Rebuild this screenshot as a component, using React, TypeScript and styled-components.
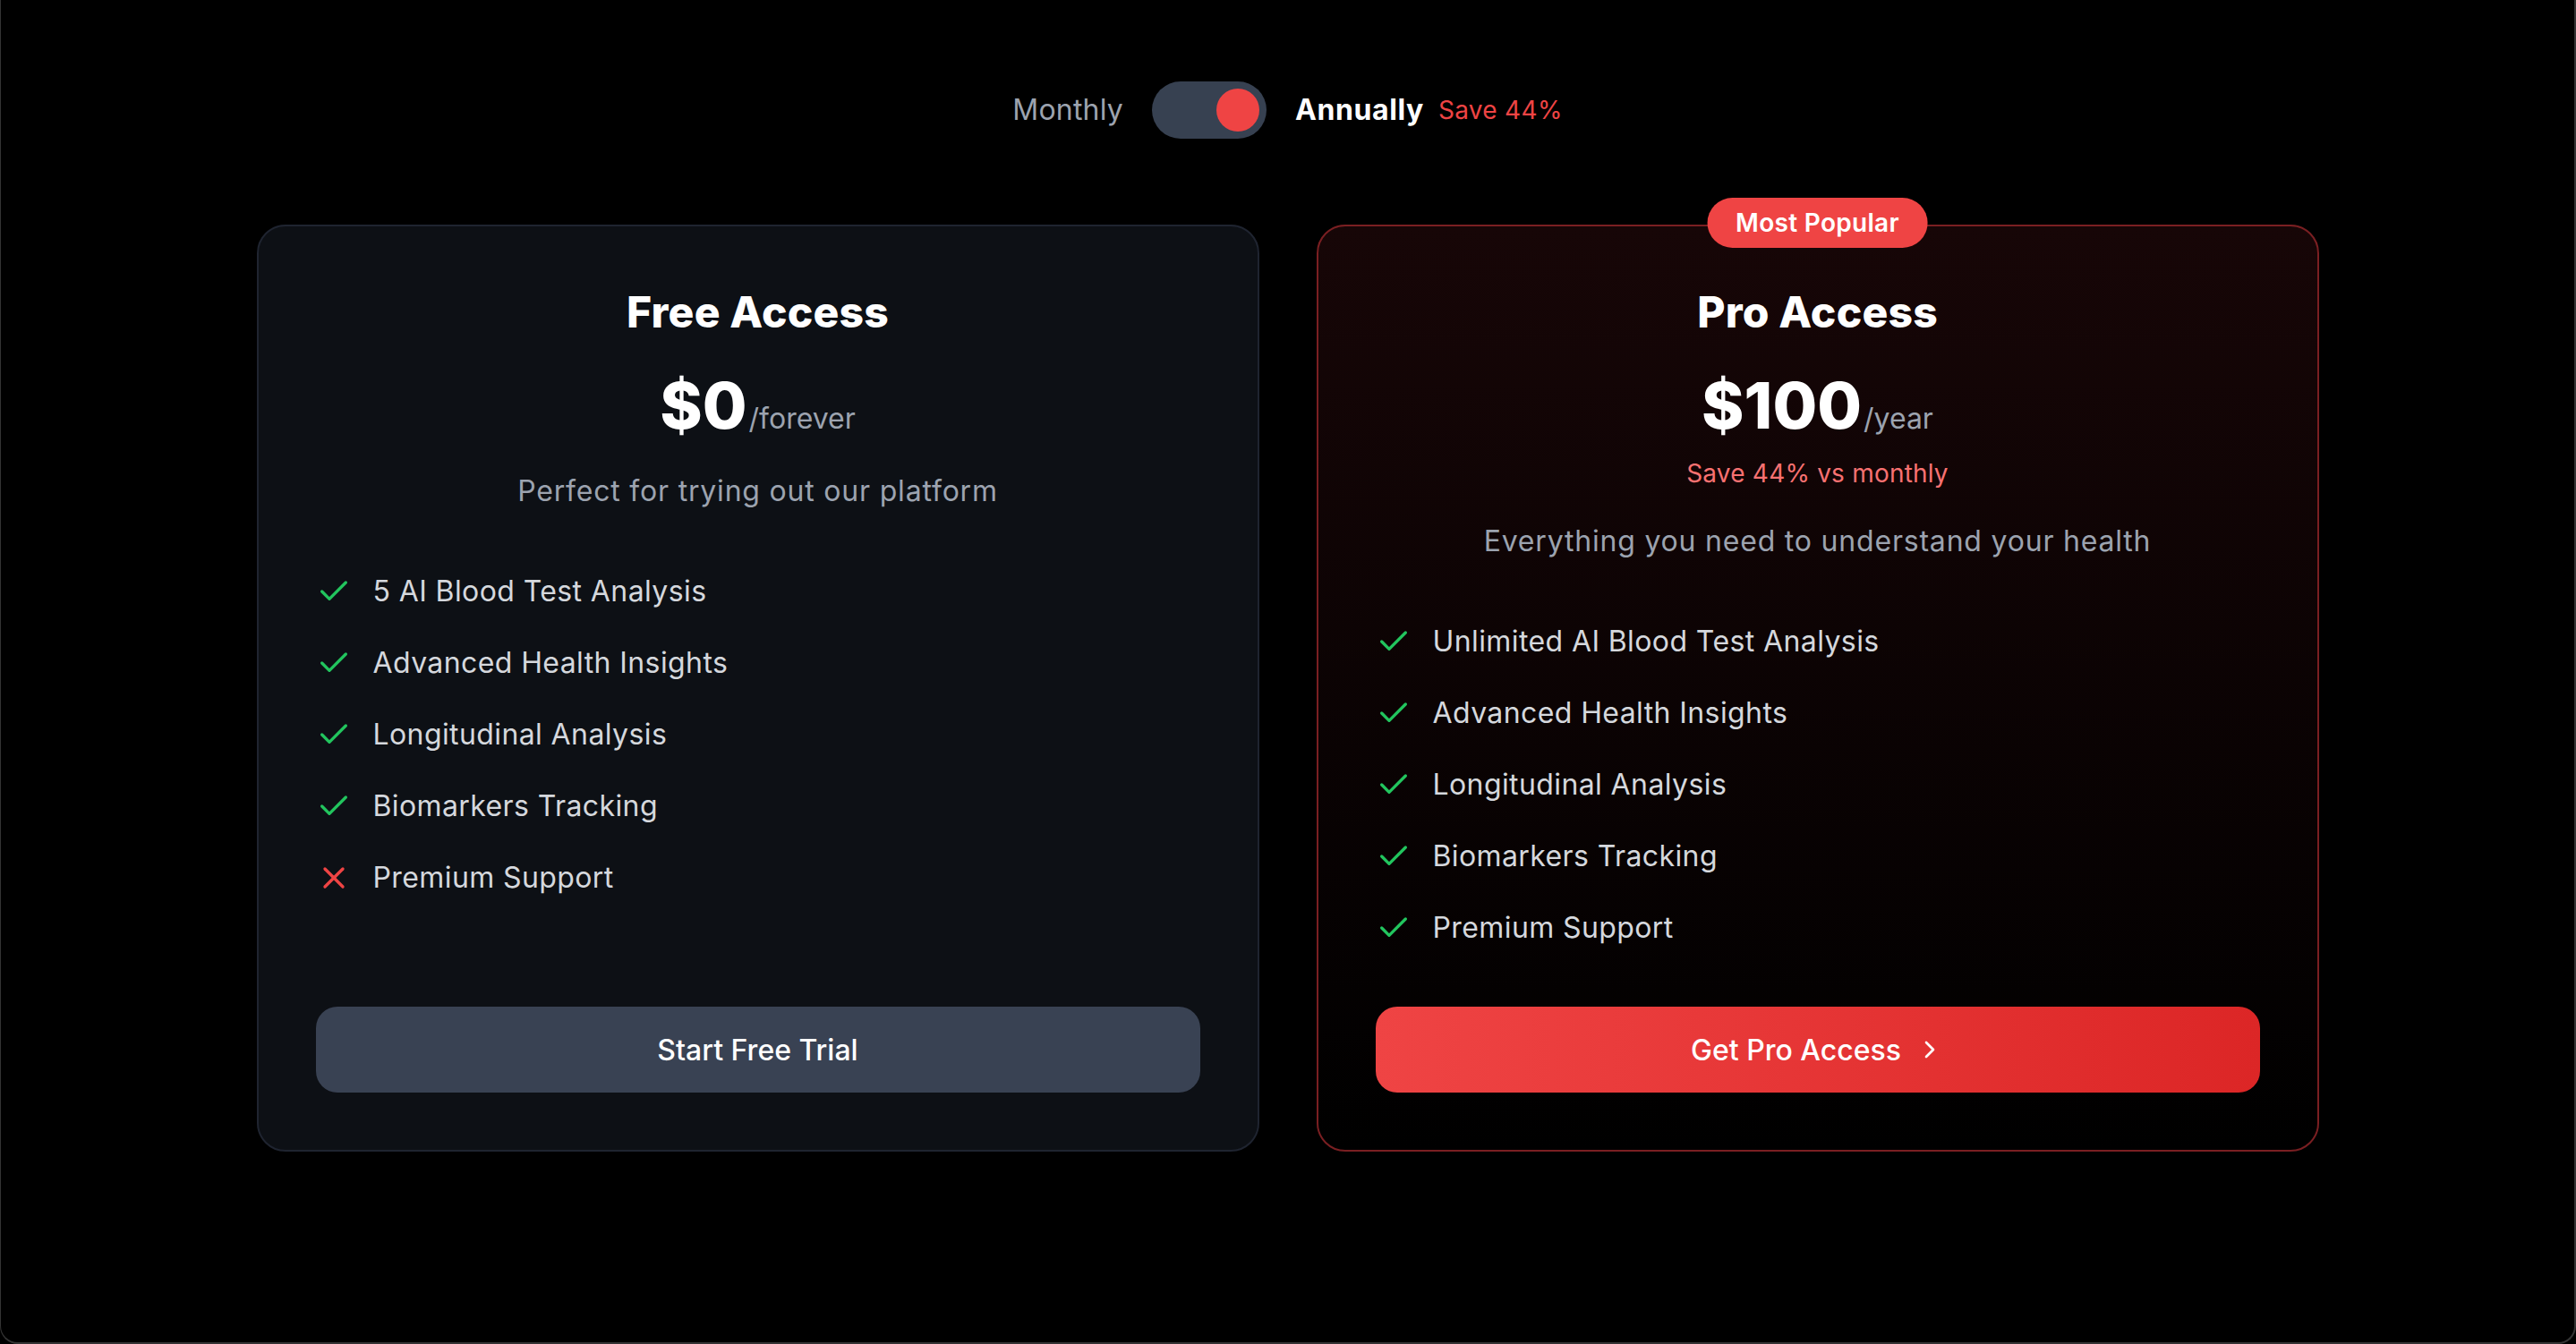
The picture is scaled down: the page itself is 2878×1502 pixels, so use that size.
import React from "react";
import styled, { createGlobalStyle } from "styled-components";

const GlobalStyle = createGlobalStyle`
  html, body {
    margin: 0;
    padding: 0;
    background: #000;
  }
  body {
    font-family: Inter, "Noto Sans", "DejaVu Sans", sans-serif;
    color: #fff;
  }
  * { box-sizing: border-box; }
`;

const Frame = styled.div`
  min-height: 1502px;
  background: #000;
  border-right: 2px solid #343434;
  border-bottom: 2px solid #343434;
  border-left: 1px solid #343434;
  border-radius: 0 0 20px 20px;
  padding-top: 91px;
  display: flex;
  flex-direction: column;
  align-items: center;
`;

const BillingRow = styled.div`
  display: flex;
  align-items: center;
  gap: 32px;
  margin-bottom: 96px;
`;

const BillingLabel = styled.span<{ $active?: boolean }>`
  font-size: 32px;
  line-height: 48px;
  font-weight: ${(p) => (p.$active ? 700 : 400)};
  letter-spacing: ${(p) => (p.$active ? "0.6px" : "0.2px")};
  color: ${(p) => (p.$active ? "#ffffff" : "#9ca3af")};
  display: flex;
  align-items: center;
`;

const SaveTag = styled.span`
  font-size: 28px;
  line-height: 40px;
  font-weight: 400;
  letter-spacing: 0.3px;
  color: #ef4444;
  margin-left: 16px;
`;

const Toggle = styled.button`
  width: 128px;
  height: 64px;
  border-radius: 999px;
  background: #374151;
  border: none;
  padding: 8px;
  display: flex;
  justify-content: flex-end;
  align-items: center;
  cursor: pointer;
`;

const Knob = styled.span`
  width: 48px;
  height: 48px;
  border-radius: 50%;
  background: #ef4444;
`;

const Grid = styled.div`
  width: 2304px;
  display: grid;
  grid-template-columns: 1fr 1fr;
  gap: 64px;
`;

const Card = styled.div<{ $pro?: boolean }>`
  position: relative;
  display: flex;
  flex-direction: column;
  padding: 64px;
  border-radius: 32px;
  border: 2px solid ${(p) => (p.$pro ? "#7a1f22" : "#1f2430")};
  background: ${(p) =>
    p.$pro ? "linear-gradient(to bottom, #170607 0%, #000000 100%)" : "#0d1015"};
`;

const Badge = styled.div`
  position: absolute;
  top: -4px;
  left: 50%;
  transform: translate(-50%, -50%);
  background: #ef4444;
  color: #fff;
  font-size: 28px;
  line-height: 40px;
  font-weight: 600;
  letter-spacing: 0.3px;
  padding: 8px 32px;
  border-radius: 999px;
  white-space: nowrap;
`;

const Header = styled.div`
  text-align: center;
`;

const PlanTitle = styled.h3`
  margin: 0 0 32px;
  font-size: 48px;
  line-height: 64px;
  font-weight: 800;
  color: #fff;
  letter-spacing: 0.2px;
`;

const PriceRow = styled.div<{ $tight?: boolean }>`
  display: flex;
  justify-content: center;
  align-items: baseline;
  margin-bottom: ${(p) => (p.$tight ? "16px" : "32px")};
`;

const Amount = styled.span`
  font-size: 72px;
  line-height: 80px;
  font-weight: 800;
  color: #fff;
`;

const Period = styled.span`
  font-size: 32px;
  line-height: 48px;
  color: #9ca3af;
  margin-left: 2px;
`;

const SaveNote = styled.p`
  margin: 0 0 32px;
  font-size: 28px;
  line-height: 40px;
  letter-spacing: 0.2px;
  color: #f87171;
`;

const Description = styled.p`
  margin: 0 0 64px;
  font-size: 32px;
  line-height: 48px;
  letter-spacing: 0.8px;
  color: #9ca3af;
`;

const FeatureList = styled.ul`
  list-style: none;
  margin: 0 0 64px;
  padding: 0;
  display: flex;
  flex-direction: column;
  gap: 32px;
  flex: 1;
`;

const Feature = styled.li`
  display: flex;
  align-items: center;
  gap: 24px;
  font-size: 32px;
  line-height: 48px;
  letter-spacing: 0.4px;
  color: #d5d8dd;
`;

const IconBox = styled.span`
  width: 40px;
  height: 40px;
  flex-shrink: 0;
  display: flex;
`;

const ActionButton = styled.button<{ $pro?: boolean }>`
  width: 100%;
  height: 96px;
  border: none;
  border-radius: 24px;
  font-family: inherit;
  font-size: 32px;
  font-weight: 500;
  color: #fff;
  display: flex;
  align-items: center;
  justify-content: center;
  gap: 16px;
  cursor: pointer;
  background: ${(p) =>
    p.$pro ? "linear-gradient(to right, #ef4444, #dc2626)" : "#394253"};
`;

const CheckIcon = () => (
  <svg width="40" height="40" viewBox="0 0 24 24" fill="none" stroke="#22c55e" strokeWidth="2" strokeLinecap="round" strokeLinejoin="round">
    <path d="M20 6 9 17l-5-5" />
  </svg>
);

const XIcon = () => (
  <svg width="40" height="40" viewBox="0 0 24 24" fill="none" stroke="#ef4444" strokeWidth="2" strokeLinecap="round" strokeLinejoin="round">
    <path d="M18 6 6 18" />
    <path d="m6 6 12 12" />
  </svg>
);

const ChevronIcon = () => (
  <svg width="32" height="32" viewBox="0 0 24 24" fill="none" stroke="#fff" strokeWidth="2" strokeLinecap="round" strokeLinejoin="round">
    <path d="m9 18 6-6-6-6" />
  </svg>
);

type Item = { label: string; included: boolean };

const freeFeatures: Item[] = [
  { label: "5 AI Blood Test Analysis", included: true },
  { label: "Advanced Health Insights", included: true },
  { label: "Longitudinal Analysis", included: true },
  { label: "Biomarkers Tracking", included: true },
  { label: "Premium Support", included: false },
];

const proFeatures: Item[] = [
  { label: "Unlimited AI Blood Test Analysis", included: true },
  { label: "Advanced Health Insights", included: true },
  { label: "Longitudinal Analysis", included: true },
  { label: "Biomarkers Tracking", included: true },
  { label: "Premium Support", included: true },
];

const Features = ({ items }: { items: Item[] }) => (
  <FeatureList>
    {items.map((it) => (
      <Feature key={it.label}>
        <IconBox>{it.included ? <CheckIcon /> : <XIcon />}</IconBox>
        {it.label}
      </Feature>
    ))}
  </FeatureList>
);

export default function App() {
  return (
    <>
      <GlobalStyle />
      <Frame>
        <BillingRow>
          <BillingLabel>Monthly</BillingLabel>
          <Toggle aria-label="Toggle billing">
            <Knob />
          </Toggle>
          <BillingLabel $active>
            Annually
            <SaveTag>Save 44%</SaveTag>
          </BillingLabel>
        </BillingRow>

        <Grid>
          <Card>
            <Header>
              <PlanTitle>Free Access</PlanTitle>
              <PriceRow>
                <Amount>$0</Amount>
                <Period>/forever</Period>
              </PriceRow>
              <Description>Perfect for trying out our platform</Description>
            </Header>
            <Features items={freeFeatures} />
            <ActionButton>Start Free Trial</ActionButton>
          </Card>

          <Card $pro>
            <Badge>Most Popular</Badge>
            <Header>
              <PlanTitle>Pro Access</PlanTitle>
              <PriceRow $tight>
                <Amount>$100</Amount>
                <Period>/year</Period>
              </PriceRow>
              <SaveNote>Save 44% vs monthly</SaveNote>
              <Description>Everything you need to understand your health</Description>
            </Header>
            <Features items={proFeatures} />
            <ActionButton $pro>
              Get Pro Access
              <ChevronIcon />
            </ActionButton>
          </Card>
        </Grid>
      </Frame>
    </>
  );
}
